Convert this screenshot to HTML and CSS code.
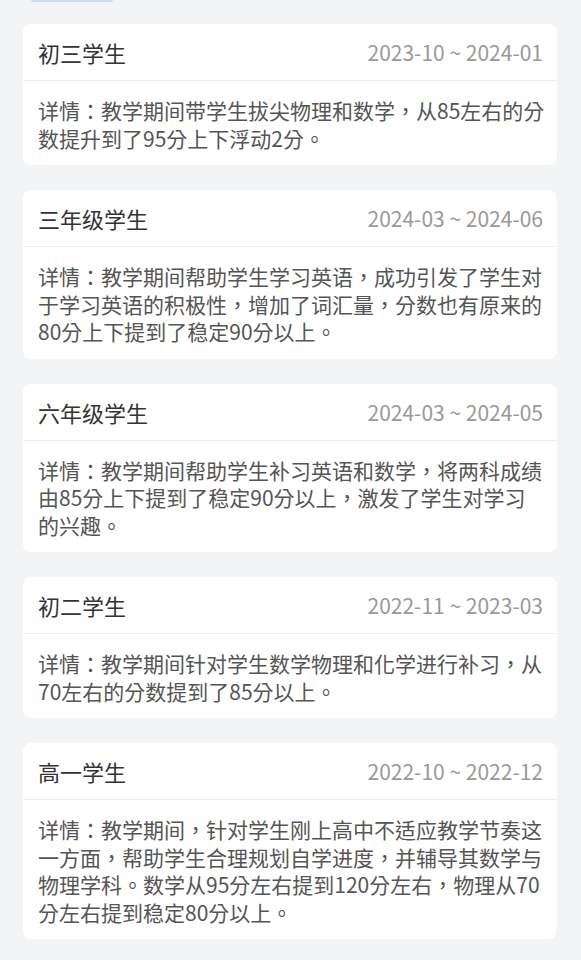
FILE: index.html
```html
<!DOCTYPE html>
<html lang="zh-CN">
<head>
<meta charset="utf-8">
<link rel="stylesheet" href="styles.css">
</head>
<body>
<div class="page">
  <div class="top-tab"></div>
  <div class="list">
    <div class="card">
      <div class="card-head"><span class="title">初三学生</span><span class="date">2023-10 ~ 2024-01</span></div>
      <div class="card-body" lang="zh-TW">详情：教学期间带学生拔尖物理和数学，从85左右的分数提升到了95分上下浮动2分。</div>
    </div>
    <div class="card">
      <div class="card-head"><span class="title">三年级学生</span><span class="date">2024-03 ~ 2024-06</span></div>
      <div class="card-body" lang="zh-TW">详情：教学期间帮助学生学习英语，成功引发了学生对于学习英语的积极性，增加了词汇量，分数也有原来的80分上下提到了稳定90分以上。</div>
    </div>
    <div class="card">
      <div class="card-head"><span class="title">六年级学生</span><span class="date">2024-03 ~ 2024-05</span></div>
      <div class="card-body" lang="zh-TW">详情：教学期间帮助学生补习英语和数学，将两科成绩由85分上下提到了稳定90分以上，激发了学生对学习的兴趣。</div>
    </div>
    <div class="card">
      <div class="card-head"><span class="title">初二学生</span><span class="date">2022-11 ~ 2023-03</span></div>
      <div class="card-body" lang="zh-TW">详情：教学期间针对学生数学物理和化学进行补习，从70左右的分数提到了85分以上。</div>
    </div>
    <div class="card">
      <div class="card-head"><span class="title">高一学生</span><span class="date">2022-10 ~ 2022-12</span></div>
      <div class="card-body" lang="zh-TW">详情：教学期间，针对学生刚上高中不适应教学节奏这一方面，帮助学生合理规划自学进度，并辅导其数学与物理学科。数学从95分左右提到120分左右，物理从70分左右提到稳定80分以上。</div>
    </div>
  </div>
</div>
</body>
</html>
```
FILE: styles.css
```css
html, body {
  margin: 0;
  padding: 0;
  background: #f3f4f6;
}
body {
  font-family: "Noto Sans CJK SC", "Noto Sans", sans-serif;
}
.page {
  width: 581px;
  height: 960px;
  overflow: hidden;
}
.top-tab {
  width: 82px;
  height: 2px;
  margin-left: 31px;
  background: #c8dcf3;
  border-radius: 0 0 2px 2px;
}
.list {
  display: flex;
  flex-direction: column;
  gap: 25px;
  padding: 22px 24px 0 23px;
}
.card {
  background: #fff;
  border-radius: 8px;
}
.card-head {
  height: 56px;
  display: flex;
  align-items: center;
  justify-content: space-between;
  padding: 0 14px 0 15px;
  border-bottom: 1px solid #ededed;
}
.title {
  font-size: 22px;
  color: #333;
}
.date {
  font-size: 21px;
  color: #999;
}
.card-body {
  font-family: "Noto Sans CJK TC", "Noto Sans CJK SC", sans-serif;
  padding: 16px 12px 13px 15px;
  font-size: 21px;
  line-height: 27.5px;
  color: #555;
}
```
